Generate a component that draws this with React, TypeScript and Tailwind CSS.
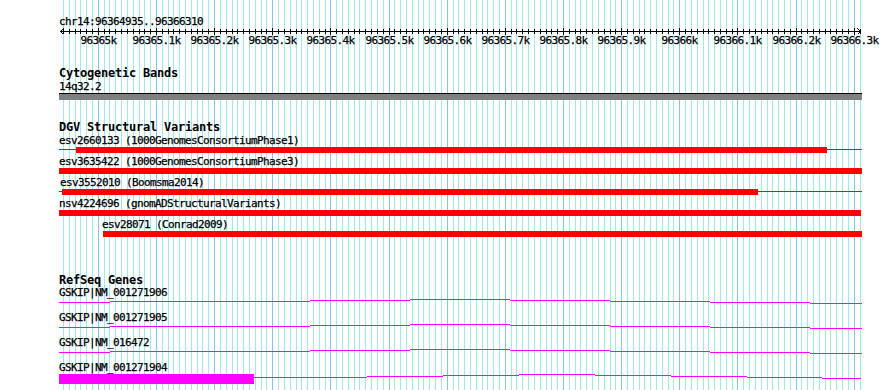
import React from 'react';

// coordinate helpers for the browser panel (bp -> px)
const px = (bp: number) => 98.3 + (bp - 96365000) * 0.5815;

const gridLines: { x: number; major: boolean }[] = [];
for (let bp = 96364940; bp <= 96366310; bp += 10) {
  gridLines.push({ x: Math.floor(px(bp)), major: bp % 100 === 0 });
}

const tickLabels = [
  '96365k', '96365.1k', '96365.2k', '96365.3k', '96365.4k', '96365.5k', '96365.6k',
  '96365.7k', '96365.8k', '96365.9k', '96366k', '96366.1k', '96366.2k', '96366.3k',
];

interface Variant {
  label: string;
  pad: string;
  thin?: [number, number];
  thick: [number, number];
}

const variants: Variant[] = [
  { label: 'esv2660133 (1000GenomesConsortiumPhase1)', pad: 'pl-[59px]', thin: [59, 862], thick: [76, 827] },
  { label: 'esv3635422 (1000GenomesConsortiumPhase3)', pad: 'pl-[59px]', thick: [59, 862] },
  { label: 'esv3552010 (Boomsma2014)', pad: 'pl-[60px]', thin: [59, 862], thick: [62, 758] },
  { label: 'nsv4224696 (gnomADStructuralVariants)', pad: 'pl-[59px]', thick: [59, 861] },
  { label: 'esv28071 (Conrad2009)', pad: 'pl-[102px]', thick: [103, 862] },
];

type Seg = [number, number, number];

const hatA: Seg[] = [
  [59, 110, 3], [110, 310, 2], [310, 410, 1], [410, 510, 0],
  [510, 610, 1], [610, 710, 2], [710, 810, 3], [810, 862, 4],
];
const hatB: Seg[] = [
  [254, 367, 3], [367, 443, 2], [443, 519, 1], [519, 595, 0],
  [595, 671, 1], [671, 747, 2], [747, 822, 3], [822, 861, 4],
];

const genes: { label: string; exon?: [number, number]; intron: Seg[] }[] = [
  { label: 'GSKIP|NM_001271906', intron: hatA },
  { label: 'GSKIP|NM_001271905', intron: hatA },
  { label: 'GSKIP|NM_016472', intron: hatA },
  { label: 'GSKIP|NM_001271904', exon: [59, 254], intron: hatB },
];

const small = 'text-[11px] tracking-[-0.62px] whitespace-pre [-webkit-text-stroke:0.25px_#000]';

const TrackTitle = ({ children, h }: { children: React.ReactNode; h: string }) => (
  <div className={`${h} pl-[59px] text-[12px] font-bold tracking-[-0.22px] whitespace-pre`}>{children}</div>
);

const Ruler = () => (
  <svg width={890} height={20} shapeRendering="crispEdges" className="block overflow-visible">
    <rect x={60} y={3} width={801} height={1} fill="#000" />
    {/* arrows */}
    <path d="M60.5 3.5 L63.5 0.5 M60.5 3.5 L63.5 6.5 M860.5 3.5 L857.5 0.5 M860.5 3.5 L857.5 6.5" stroke="#000" fill="none" />
    {gridLines.map((g, i) =>
      g.major ? (
        <rect key={i} x={g.x} y={0} width={1} height={7} fill="#000" />
      ) : (
        <rect key={i} x={g.x} y={1} width={1} height={5} fill="#000" />
      )
    )}
    {gridLines
      .filter((g) => g.major)
      .map((g, i) => (
        <text
          key={i}
          x={g.x + 0.5}
          y={16}
          textAnchor="middle"
          fontSize={11}
          letterSpacing={-0.62}
          fill="#000"
          stroke="#000"
          strokeWidth={0.25}
          fontFamily="'DejaVu Sans Mono', monospace"
          shapeRendering="auto"
        >
          {tickLabels[i]}
        </text>
      ))}
  </svg>
);

export default function App() {
  return (
    <div className="relative w-[890px] h-[390px] overflow-hidden bg-white text-black font-['DejaVu_Sans_Mono',monospace]">
      {/* grid */}
      <svg width={890} height={390} shapeRendering="crispEdges" className="absolute inset-0">
        {gridLines.map((g, i) => (
          <rect key={i} x={g.x} y={0} width={1} height={390} fill={g.major ? '#86c2ec' : '#a4e6ea'} />
        ))}
      </svg>

      <div className="relative flex flex-col">
        <div className="h-[15px]" />
        <div className={`h-[13px] pl-[59px] leading-[13px] ${small}`}>chr14:96364935..96366310</div>
        <Ruler />

        <div className="h-[18px]" />
        <TrackTitle h="h-[14px] leading-[14px]">Cytogenetic Bands</TrackTitle>
        <div className={`h-[13px] pl-[59px] leading-[13px] ${small}`}>14q32.2</div>
        <svg width={890} height={7} shapeRendering="crispEdges" className="block">
          <rect x={59} y={0} width={803} height={1} fill="#000" />
          <rect x={59} y={1} width={803} height={6} fill="#808080" />
        </svg>

        <div className="h-[21px]" />
        <TrackTitle h="h-[13px] leading-[13px]">DGV Structural Variants</TrackTitle>
        {variants.map((v) => (
          <div key={v.label} className="flex flex-col">
            <div className={`relative z-10 h-[13px] ${v.pad} leading-[13px] ${small}`}>{v.label}</div>
            <svg width={890} height={8} shapeRendering="crispEdges" className="block">
              {v.thin && <rect x={v.thin[0]} y={2} width={v.thin[1] - v.thin[0]} height={1} fill="#ff0000" />}
              <rect x={v.thick[0]} y={0} width={v.thick[1] - v.thick[0]} height={6} fill="#ff0000" />
            </svg>
          </div>
        ))}

        <div className="h-[34px]" />
        <TrackTitle h="h-[14px] leading-[14px]">RefSeq Genes</TrackTitle>
        {genes.map((g) => (
          <div key={g.label} className="flex flex-col">
            <div className={`relative z-10 h-[12px] pl-[59px] leading-[12px] ${small}`}>{g.label}</div>
            <svg width={890} height={13} shapeRendering="crispEdges" className="block">
              {g.exon && <rect x={g.exon[0]} y={0} width={g.exon[1] - g.exon[0]} height={10} fill="#ff00ff" />}
              {g.intron.map(([a, b, y], i) => (
                <rect key={i} x={a} y={y} width={b - a} height={1} fill="#ff00ff" />
              ))}
            </svg>
          </div>
        ))}
      </div>
    </div>
  );
}
